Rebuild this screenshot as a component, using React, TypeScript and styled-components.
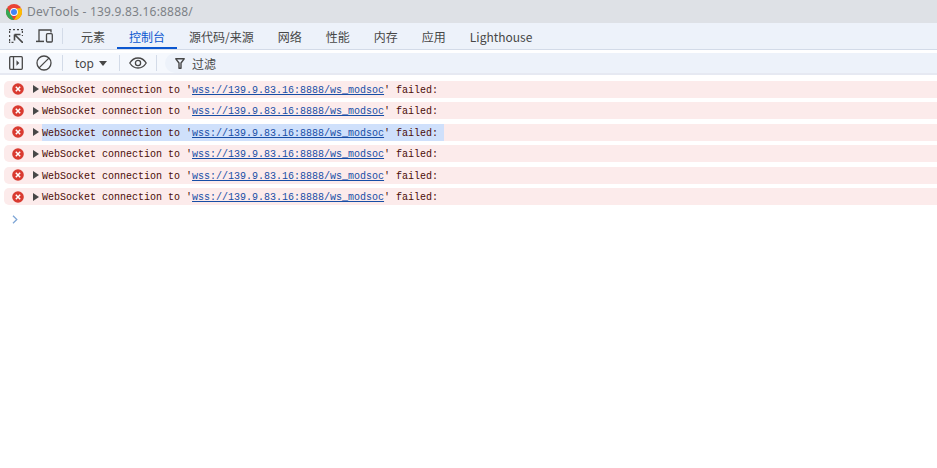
import React from 'react';
import styled, { createGlobalStyle } from 'styled-components';

const GlobalStyle = createGlobalStyle`
  html, body {
    margin: 0;
    padding: 0;
    background: #fff;
  }
  body {
    font-family: "Noto Sans CJK SC", "Liberation Sans", sans-serif;
    overflow: hidden;
  }
`;

const TABS = ['元素', '控制台', '源代码/来源', '网络', '性能', '内存', '应用', 'Lighthouse'];
const ROW_COUNT = 6;

const ChromeLogo = () => (
  <svg width="16" height="16" viewBox="0 0 16 16">
    <circle cx="8" cy="8" r="8" fill="#ea4335" />
    <path d="M8 16A8 8 0 0 1 1.070 4L4.800 10.500 8 16z" fill="#34a853" />
    <path d="M14.930 4A8 8 0 0 1 8 16l3.200-5.500L11 4.500z" fill="#fbbc05" />
    <circle cx="8" cy="8" r="3.900" fill="#fff" />
    <circle cx="8" cy="8" r="3" fill="#4285f4" />
  </svg>
);

const InspectIcon = () => (
  <svg width="14" height="14" viewBox="0 0 14 14" fill="none" stroke="#474747" strokeWidth="1.200">
    <path d="M0 .6h2M4 .6h2M8 .6h2M12 .6h2M.6 2v2M.6 6v2M.6 10v2M.6 12.500v1.500M2.500 13.400h2M13.400 2v2M13.400 6v1" />
    <path d="M5.500 5.500h6M5.500 5.500v6M6 6l8 8" strokeWidth="1.600" />
  </svg>
);

const DeviceIcon = () => (
  <svg width="17" height="14" viewBox="0 0 17 14" fill="none" stroke="#474747" strokeWidth="1.300">
    <path d="M3 12V1H15V3.500" />
    <path d="M0 12.400h8" strokeWidth="1.500" />
    <rect x="10.500" y="4.700" width="5.800" height="8.300" rx="1" />
  </svg>
);

const SidebarIcon = () => (
  <svg width="14" height="14" viewBox="0 0 14 14" fill="none" stroke="#474747" strokeWidth="1.300">
    <rect x="0.700" y="0.700" width="12.600" height="12.600" rx="1" />
    <path d="M4.500 1v12" />
    <path d="M7.500 4.300L10.300 7 7.500 9.700z" fill="#474747" stroke="none" />
  </svg>
);

const ClearIcon = () => (
  <svg width="16" height="16" viewBox="0 0 16 16" fill="none" stroke="#474747" strokeWidth="1.300">
    <circle cx="8" cy="8" r="7" />
    <path d="M3.100 12.900L12.900 3.100" />
  </svg>
);

const EyeIcon = () => (
  <svg width="18" height="12" viewBox="0 0 18 12" fill="none" stroke="#474747" strokeWidth="1.300">
    <path d="M.8 6C2.800 2.700 5.600 1 9 1s6.200 1.700 8.200 5c-2 3.300-4.800 5-8.200 5S2.800 9.300.8 6z" />
    <circle cx="9" cy="6" r="2.600" />
  </svg>
);

const FilterIcon = () => (
  <svg width="10" height="11" viewBox="0 0 10 11" fill="none" stroke="#474747" strokeWidth="1.400">
    <path d="M.8.8h8.400L6 5v5.200H4V5z" strokeLinejoin="round" />
  </svg>
);

const ErrorIcon = () => (
  <svg width="12" height="12" viewBox="0 0 12 12">
    <circle cx="6" cy="6" r="5.800" fill="#d93a30" />
    <path d="M3.800 3.800l4.400 4.400M8.200 3.800L3.800 8.200" stroke="#fff" strokeWidth="1.500" />
  </svg>
);

const App = () => (
  <Page>
    <GlobalStyle />
    <TitleBar>
      <ChromeLogo />
      <TitleText>DevTools - 139.9.83.16:8888/</TitleText>
    </TitleBar>
    <TabBar>
      <IconGroup>
        <InspectIcon />
        <DeviceIcon />
      </IconGroup>
      <Divider />
      <Tabs>
        {TABS.map((tab, i) => (
          <Tab key={tab} $active={i === 1}>{tab}</Tab>
        ))}
      </Tabs>
    </TabBar>
    <Toolbar>
      <ToolIcons>
        <SidebarIcon />
        <ClearIcon />
      </ToolIcons>
      <Divider />
      <ContextSelect>top<Caret /></ContextSelect>
      <Divider />
      <EyeSlot><EyeIcon /></EyeSlot>
      <Divider />
      <FilterBox>
        <FilterIcon />
        <span>过滤</span>
      </FilterBox>
    </Toolbar>
    <Console>
      {Array.from({ length: ROW_COUNT }, (_, i) => (
        <Row key={i}>
          <ErrorIcon />
          <Arrow />
          <Message $selected={i === 2}>
            WebSocket connection to '<Link>wss://139.9.83.16:8888/ws_modsoc</Link>' failed:
          </Message>
        </Row>
      ))}
      <Prompt>
        <svg width="6" height="9" viewBox="0 0 6 9" fill="none" stroke="#7fa6d6" strokeWidth="1.300">
          <path d="M1 .8L4.800 4.500 1 8.200" />
        </svg>
      </Prompt>
    </Console>
  </Page>
);

export default App;

const Page = styled.div`
  width: 937px;
  height: 468px;
  background: #fff;
  overflow: hidden;
`;

const TitleBar = styled.div`
  height: 23px;
  background: #dee1e6;
  display: flex;
  align-items: center;
  gap: 5px;
  padding-left: 6px;
`;

const TitleText = styled.span`
  font-family: "Noto Sans", "Liberation Sans", sans-serif;
  font-size: 12px;
  letter-spacing: 0.2px;
  color: #7d8186;
`;

const TabBar = styled.div`
  height: 26px;
  background: #edf2fa;
  border-bottom: 1px solid #d3dbe8;
  display: flex;
  align-items: center;
  padding-left: 9px;
`;

const IconGroup = styled.div`
  display: flex;
  align-items: center;
  gap: 13px;
  margin-right: 9px;
`;

const Divider = styled.div`
  width: 1px;
  height: 16px;
  background: #d3dbe8;
`;

const Tabs = styled.div`
  display: flex;
  height: 100%;
  margin-left: 6px;
`;

const Tab = styled.div<{ $active?: boolean }>`
  display: flex;
  align-items: center;
  padding: 0 12px;
  font-size: 12px;
  color: ${p => (p.$active ? '#0b57d0' : '#474747')};
  box-shadow: ${p => (p.$active ? 'inset 0 -2px 0 #0b57d0' : 'none')};
`;

const Toolbar = styled.div`
  margin-top: 3px;
  height: 20px;
  background: #f5f8fd;
  border-bottom: 2px solid #e6e9f2;
  display: flex;
  align-items: center;
  padding-left: 9px;
`;

const ToolIcons = styled.div`
  display: flex;
  align-items: center;
  gap: 13px;
  margin-right: 10px;
`;

const ContextSelect = styled.div`
  display: flex;
  align-items: center;
  gap: 5px;
  width: 56px;
  padding-left: 12px;
  box-sizing: border-box;
  font-family: "Noto Sans", "Liberation Sans", sans-serif;
  font-size: 12px;
  color: #474747;
`;

const Caret = styled.i`
  width: 0;
  height: 0;
  border-left: 4px solid transparent;
  border-right: 4px solid transparent;
  border-top: 5px solid #474747;
`;

const EyeSlot = styled.div`
  width: 36px;
  display: flex;
  justify-content: center;
`;

const FilterBox = styled.div`
  flex: 1;
  margin-left: 8px;
  display: flex;
  align-items: center;
  gap: 7px;
  padding-left: 10px;
  height: 20px;
  border-radius: 10px 0 0 10px;
  background: #edf2fa;
  font-size: 12px;
  color: #474747;
`;

const Console = styled.div`
  padding: 5.750px 0 0 4px;
`;

const Row = styled.div`
  height: 17px;
  margin-bottom: 4.500px;
  display: flex;
  align-items: center;
  padding-left: 8px;
  background: #fcebeb;
  border-radius: 5px 0 0 5px;
`;

const Arrow = styled.i`
  width: 0;
  height: 0;
  margin: 0 3px 0 9px;
  border-top: 4px solid transparent;
  border-bottom: 4px solid transparent;
  border-left: 6px solid #474747;
`;

const Message = styled.span<{ $selected?: boolean }>`
  font-family: "Liberation Mono", monospace;
  font-size: 10px;
  line-height: 19px;
  height: 17px;
  white-space: pre;
  color: #4a0b06;
  padding-right: 6px;
  background: ${p => (p.$selected ? '#cfe0fb' : 'transparent')};
`;

const Link = styled.span`
  color: #174ea6;
  text-decoration: underline;
`;

const Prompt = styled.div`
  padding: 3px 0 0 8px;
  line-height: 9px;
`;
